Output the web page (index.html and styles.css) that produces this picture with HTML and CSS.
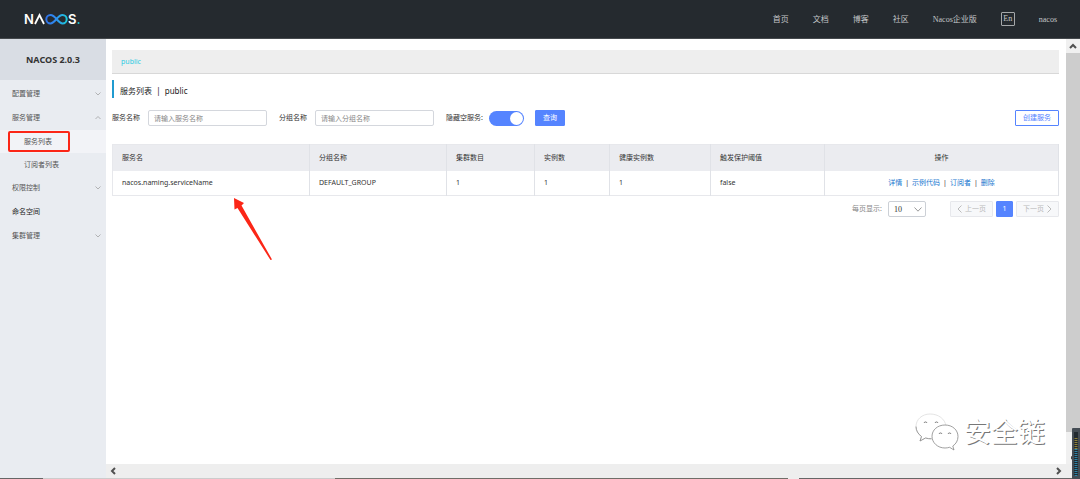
FILE: index.html
```html
<!DOCTYPE html>
<html lang="zh-CN">
<head>
<meta charset="utf-8">
<title>NACOS</title>
<link rel="stylesheet" href="styles.css">
</head>
<body>
<div class="app">
  <header class="topbar">
    <a class="logo" href="#" aria-label="NACOS">
      <svg width="58" height="14" viewBox="0 0 58 14">
        <defs><linearGradient id="loop" x1="0" x2="1"><stop offset="0" stop-color="#2f72e8"/><stop offset=".45" stop-color="#2f8cf0"/><stop offset="1" stop-color="#1cc9dc"/></linearGradient></defs>
        <text class="logo-text" x="0" y="12">N</text>
        <path d="M11 12 15.500 3 20 12" fill="none" stroke="#fff" stroke-width="1.800"/>
        <path d="M32.500 7C30 4 28.500 3 26.500 3a4.200 4.200 0 0 0 0 8.400C28.500 11.400 30 10 32.500 7S36.500 3 38.500 3a4.200 4.200 0 0 1 0 8.400C36.500 11.400 35 10 32.500 7" fill="none" stroke="url(#loop)" stroke-width="2"/>
        <text class="logo-text" x="44" y="12">S</text>
        <circle cx="54.500" cy="11" r="1" fill="#1cc9dc"/>
      </svg>
    </a>
    <nav class="topnav">
      <a href="#">首页</a><a href="#">文档</a><a href="#">博客</a><a href="#">社区</a><a href="#">Nacos企业版</a>
      <button class="lang" type="button">En</button>
      <a class="user" href="#">nacos</a>
    </nav>
  </header>
  <div class="body">
    <aside class="sidebar">
      <h1 class="brand">NACOS 2.0.3</h1>
      <nav class="menu">
        <a class="item" href="#">配置管理<svg class="chev" viewBox="0 0 6 4"><path d="M.5.5 3 3 5.500.5"/></svg></a>
        <a class="item" href="#">服务管理<svg class="chev" viewBox="0 0 6 4"><path d="M.5 3 3 .5 5.500 3"/></svg></a>
        <a class="item sub selected" href="#">服务列表<span class="highlight"></span></a>
        <a class="item sub" href="#">订阅者列表</a>
        <a class="item" href="#">权限控制<svg class="chev" viewBox="0 0 6 4"><path d="M.5.5 3 3 5.500.5"/></svg></a>
        <a class="item dark" href="#">命名空间</a>
        <a class="item" href="#">集群管理<svg class="chev" viewBox="0 0 6 4"><path d="M.5.5 3 3 5.500.5"/></svg></a>
      </nav>
    </aside>
    <div class="viewport">
      <main class="content">
        <div class="namespace"><a href="#">public</a></div>
        <h2 class="title">服务列表&nbsp; |&nbsp; public</h2>
        <form class="filters">
          <label for="service">服务名称</label>
          <input class="field" id="service" type="text" placeholder="请输入服务名称">
          <label for="group">分组名称</label>
          <input class="field" id="group" type="text" placeholder="请输入分组名称">
          <label class="toggle-label" for="hide">隐藏空服务:</label>
          <input class="toggle" id="hide" type="checkbox" checked>
          <button class="primary" type="button">查询</button>
          <button class="create" type="button">创建服务</button>
        </form>
        <table class="services">
          <colgroup><col class="c-name"><col class="c-group"><col class="c-cluster"><col class="c-count"><col class="c-healthy"><col class="c-limit"><col></colgroup>
          <thead><tr><th>服务名</th><th>分组名称</th><th>集群数目</th><th>实例数</th><th>健康实例数</th><th>触发保护阈值</th><th class="ops">操作</th></tr></thead>
          <tbody><tr><td>nacos.naming.serviceName</td><td>DEFAULT_GROUP</td><td>1</td><td>1</td><td>1</td><td>false</td>
          <td class="ops"><a href="#">详情</a><i>|</i><a href="#">示例代码</a><i>|</i><a href="#">订阅者</a><i>|</i><a href="#">删除</a></td></tr></tbody>
        </table>
        <div class="pager">
          <label for="size">每页显示:</label>
          <span class="size"><select id="size"><option>10</option></select><svg viewBox="0 0 8 5"><path d="M.5.5 4 4.200 7.500.5"/></svg></span>
          <button class="step prev" type="button" disabled><svg viewBox="0 0 5 8"><path d="M4.500.5 1 4l3.500 3.500"/></svg>上一页</button>
          <button class="current" type="button">1</button>
          <button class="step" type="button" disabled>下一页<svg viewBox="0 0 5 8"><path d="M.5.5 4 4 .5 7.500"/></svg></button>
        </div>
        <svg class="arrow" viewBox="0 0 40 63"><path d="M1 0 11 5 8.500 7.500 39 61.500 37.500 62 4.500 10 1.500 11.500z" fill="#fb2617"/></svg>
        <div class="watermark">
          <svg viewBox="0 0 44 38">
            <g fill="#fff" stroke-width=".8"><path stroke="#ddd" d="M15 1C7 1 1 6.500 1 13.500c0 4 2 7.500 5.500 10L5 28l5.500-3c2 .6 4 .8 6 .8L31 13C30 6 23.500 1 15 1Z"/>
            <path fill="none" stroke="#888" d="M1 13.500c0 4 2 7.500 5.500 10L5 28l5.500-3c2 .6 4 .8 6 .8"/>
            <path stroke="#888" d="M30 12c-7.500 0-13 5-13 11.300S22.500 35 30 35c1.600 0 3.200-.3 4.600-.7L39 37l-1.200-4C41 31 43 27.500 43 23.500 43 17 37.500 12 30 12Z"/></g>
            <g fill="none" stroke="#777"><path d="M9 10a1.600 1.600 0 0 1 3 0M20 10a1.600 1.600 0 0 1 3 0M24 21a1.600 1.600 0 0 1 3 0M33 21a1.600 1.600 0 0 1 3 0"/></g>
          </svg>
          <span>安全链</span>
        </div>
      </main>
      <div class="vbar"><svg viewBox="0 0 14 14"><path d="M4 9 7 6l3 3"/></svg><span class="thumb"></span><span class="rest"></span></div>
      <div class="hbar"><svg viewBox="0 0 14 14"><path d="M9 4 6 7l3 3"/></svg><svg viewBox="0 0 14 14"><path d="M5 4l3 3-3 3"/></svg></div>
      <div class="corner"></div>
    </div>
  </div>
  <div class="edge"></div>
  <svg class="meter" viewBox="0 0 9 51"><path d="M1 28 0 31l2-1" stroke="#444" fill="#444"/><rect x="1" width="9" height="51" rx="1" fill="#454d55"/><rect x="3" y="4" width="4" height="44" fill="#222a30"/><path d="M5 10v11" stroke="#8f8238" stroke-width="3" stroke-dasharray="1 1"/><path d="M5 21v27" stroke="#2c83a8" stroke-width="3" stroke-dasharray="1 1"/></svg>
</div>
</body>
</html>
```
FILE: styles.css
```css
* { box-sizing: border-box; }
body { margin: 0; font: 7px/12px "Noto Sans", "Noto Sans CJK SC", sans-serif; color: #333; background: #fff; }
a { color: inherit; text-decoration: none; }
button, input, select { font: inherit; margin: 0; }
svg { flex: none; }
.app { position: relative; display: flex; flex-direction: column; min-height: 100vh; overflow: hidden; }

.topbar { display: flex; align-items: center; justify-content: space-between; height: 39px; padding: 0 23px 0 24px; background: #252a2f; border-bottom: 1px solid #45494d; }
.logo { display: flex; }
.logo-text { font: 600 13px Inter, sans-serif; fill: #fff; }
.topnav { display: flex; align-items: center; gap: 24px; color: #c4c6c8; font: 8px/12px "Liberation Serif", "Noto Sans CJK SC", serif; }
.topnav a { padding-top: 2px; }
.lang { width: 14px; height: 14px; padding: 0; border: 1px solid #a5a8aa; border-radius: 1px; background: none; color: inherit; line-height: 12px; }

.body { display: flex; flex: 1; }
.sidebar { width: 106px; flex: none; background: #e9ecf1; }
.brand { margin: 0; height: 41px; background: #d9dde4; font-size: 9px; line-height: 42px; text-align: center; }
.menu { display: flex; flex-direction: column; padding-top: 2px; }
.item { position: relative; display: flex; align-items: center; justify-content: space-between; height: 24px; padding: 0 5px 0 12px; color: #555; }
.sub { height: 23px; padding-left: 24px; }
.selected { background: #f2f3f7; }
.dark { color: #222; }
.chev { width: 6px; height: 4px; fill: none; stroke: #999; stroke-width: .7; }
.highlight { position: absolute; left: 8px; top: 1px; width: 62px; height: 21px; border: 2px solid #fb2617; border-radius: 2px; }

.viewport { flex: 1; min-width: 0; display: grid; grid-template-columns: 1fr 14px; grid-template-rows: 1fr 14px; }
.content { position: relative; padding: 11px 7px 0 6px; min-width: 0; }
.namespace { height: 24px; padding: 0 9px; background: #eee; border-bottom: 1px solid #d8d8d8; line-height: 24px; color: #2ccbe3; }
.title { margin: 6px 0 12px; height: 18px; padding-left: 6px; border-left: 2px solid #209bd0; font-size: 8px; font-weight: 400; line-height: 22px; color: #222; }
.filters { display: flex; align-items: center; height: 16px; }
.field { width: 119px; height: 16px; margin: 0 12px 0 8px; padding: 0 5px; border: 1px solid #d4d7dd; border-radius: 2px; background: #fff; outline: 0; }
.field::placeholder { color: #888; opacity: 1; }
.toggle { appearance: none; display: flex; justify-content: flex-end; width: 35px; height: 15px; margin: 0 11px 0 6px; padding: 1px; border-radius: 8px; background: #5584ff; }
.toggle::before { content: ""; width: 13px; height: 13px; border-radius: 50%; background: #fff; }
.primary, .create { height: 16px; padding: 0 7px; border: 1px solid #5584ff; border-radius: 1px; line-height: 14px; }
.primary { width: 30px; background: #5584ff; color: #fff; }
.create { margin-left: auto; background: #fff; color: #5584ff; }

.services { width: 100%; margin-top: 18px; table-layout: fixed; border-collapse: collapse; border: 1px solid #e7e8ec; }
.services th, .services td { height: 25px; padding: 0 9px; border-right: 1px solid #e0e2e7; text-align: left; font-weight: 400; }
.services th { height: 26px; background: #ebecf0; }
.services .ops { text-align: center; }
.services .ops a { color: #1676cf; }
.services i { margin: 0 3px; font-style: normal; }
.c-name { width: 197px; }
.c-group { width: 137px; }
.c-cluster { width: 88px; }
.c-count { width: 75px; }
.c-healthy { width: 101px; }
.c-limit { width: 114px; }

.pager { display: flex; align-items: center; justify-content: flex-end; gap: 3px; margin-top: 5px; color: #888; }
.size { display: flex; align-items: center; margin: 0 21px 0 3px; }
.size select { appearance: none; width: 38px; height: 16px; padding: 0 5px; border: 1px solid #ccd0d6; border-radius: 2px; background: #fff; color: #333; font: 8px "Liberation Serif", serif; }
.size svg { width: 8px; height: 5px; margin-left: -12px; margin-right: 4px; fill: none; stroke: #999; pointer-events: none; }
.step, .current { height: 16px; border: 1px solid #e7e8ec; border-radius: 1px; padding: 0; line-height: 14px; }
.step { display: flex; align-items: center; justify-content: center; gap: 3px; width: 43px; background: #f7f8fa; color: #bbb; }
.step svg { width: 5px; height: 8px; fill: none; stroke: #bbb; }
.current { width: 17px; border-color: #5584ff; background: #5584ff; color: #fff; }

.arrow { position: absolute; left: 127px; top: 159px; width: 40px; height: 63px; }
.watermark { position: absolute; right: 21px; bottom: 13px; display: flex; align-items: center; gap: 5px; color: #fff; font-size: 27px; line-height: 36px; text-shadow: 1px 1px 0 #777; }
.watermark svg { width: 44px; height: 38px; }

.vbar { display: flex; flex-direction: column; background: #f0f0f0; }
.thumb { flex: 379; background: #cdcdcd; }
.rest { flex: 32; }
.hbar { display: flex; justify-content: space-between; background: #eee; }
.corner { background: #eee; }
.vbar svg, .hbar svg { width: 14px; height: 14px; fill: none; stroke: #505050; stroke-width: 2; }
.edge { height: 1px; background: linear-gradient(90deg, #666 0 4%, #ccc 4% 31%, #706e68 31% 73%, #eee 73% 74%, #666 74%); }
.meter { position: absolute; right: 0; bottom: 0; width: 9px; height: 51px; }
```
